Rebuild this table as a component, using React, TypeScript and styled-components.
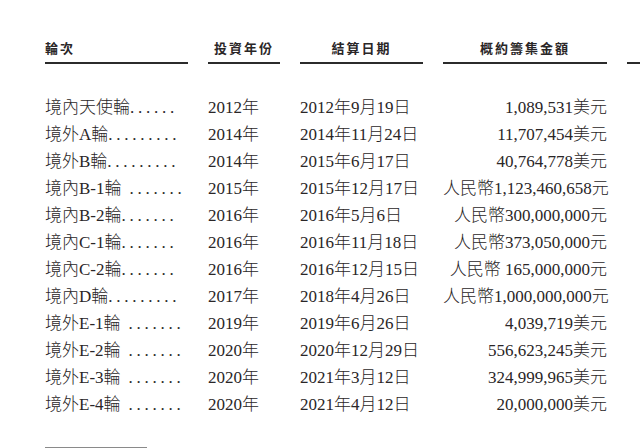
import styled, { createGlobalStyle } from "styled-components";

const GlobalStyle = createGlobalStyle`
    body {
        margin: 0;
        background: #ffffff;
        overflow: hidden;
    }
`;

const rounds = [
    { name: "境內天使輪", dots: "......", year: "2012年", date: "2012年9月19日", amount: "1,089,531美元" },
    { name: "境外A輪", dots: ".........", year: "2014年", date: "2014年11月24日", amount: "11,707,454美元" },
    { name: "境外B輪", dots: ".........", year: "2014年", date: "2015年6月17日", amount: "40,764,778美元" },
    { name: "境內B-1輪", dots: " .......", year: "2015年", date: "2015年12月17日", amount: "人民幣1,123,460,658元" },
    { name: "境內B-2輪", dots: ".......", year: "2016年", date: "2016年5月6日", amount: "人民幣300,000,000元" },
    { name: "境內C-1輪", dots: ".......", year: "2016年", date: "2016年11月18日", amount: "人民幣373,050,000元" },
    { name: "境內C-2輪", dots: ".......", year: "2016年", date: "2016年12月15日", amount: "人民幣 165,000,000元" },
    { name: "境內D輪", dots: ".........", year: "2017年", date: "2018年4月26日", amount: "人民幣1,000,000,000元" },
    { name: "境外E-1輪", dots: " .......", year: "2019年", date: "2019年6月26日", amount: "4,039,719美元" },
    { name: "境外E-2輪", dots: " .......", year: "2020年", date: "2020年12月29日", amount: "556,623,245美元" },
    { name: "境外E-3輪", dots: " .......", year: "2020年", date: "2021年3月12日", amount: "324,999,965美元" },
    { name: "境外E-4輪", dots: " .......", year: "2020年", date: "2021年4月12日", amount: "20,000,000美元" },
];

export default function App() {
    return (
        <Page>
            <GlobalStyle />
            <Table>
                <HeadCell $align="left">輪次</HeadCell>
                <HeadCell>投資年份</HeadCell>
                <HeadCell>結算日期</HeadCell>
                <HeadCell>概約籌集金額</HeadCell>
                <HeadCell />
                <Spacer />
                {rounds.map((r) => (
                    <Row key={r.name}>
                        <Cell>
                            {r.name}
                            <Dots>{r.dots}</Dots>
                        </Cell>
                        <Cell>{r.year}</Cell>
                        <Cell>{r.date}</Cell>
                        <Cell $align="right">{r.amount}</Cell>
                        <Cell />
                    </Row>
                ))}
            </Table>
            <FootRule />
        </Page>
    );
}

const Page = styled.div`
    width: 640px;
    height: 448px;
    padding-left: 45px;
    box-sizing: border-box;
    font-family: "Liberation Serif", "Noto Sans CJK TC", serif;
    color: #2a2627;
`;

const Table = styled.div`
    display: grid;
    grid-template-columns: 143px 72px 123px 164px 40px;
    column-gap: 20px;
`;

const HeadCell = styled.div<{ $align?: string }>`
    padding-top: 40px;
    padding-bottom: 4px;
    line-height: 18px;
    height: 18px;
    font-size: 13px;
    font-weight: bold;
    letter-spacing: 2px;
    text-align: ${(p) => p.$align || "center"};
    border-bottom: 2px solid #2b2b2b;
`;

const Spacer = styled.div`
    grid-column: 1 / -1;
    height: 30px;
`;

const Row = styled.div`
    display: contents;
`;

const Cell = styled.div<{ $align?: string }>`
    font-size: 17px;
    font-weight: 300;
    line-height: 27px;
    height: 27px;
    white-space: pre;
    text-align: ${(p) => p.$align || "left"};
`;

const Dots = styled.span`
    letter-spacing: 3.75px;
`;

const FootRule = styled.div`
    margin-top: 29px;
    width: 102px;
    height: 1px;
    background: #8a8a8a;
`;
